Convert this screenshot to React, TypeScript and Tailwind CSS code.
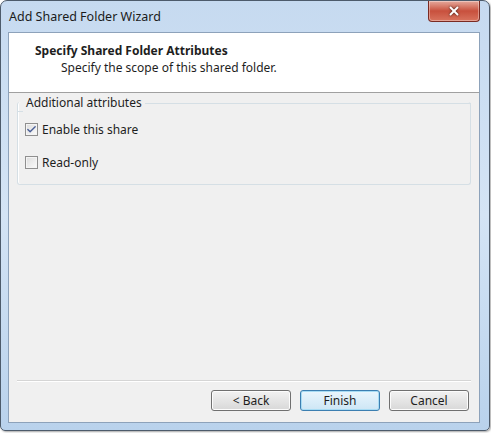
import { X, Check } from 'lucide-react';

const ui = { fontFamily: '"Noto Sans", "Open Sans", sans-serif' };

function WinButton({ label, focused }: { label: string; focused?: boolean }) {
  return (
    <button
      className={`h-[21px] w-[80px] rounded-[3px] border text-[12px] text-[#1e1e1e] bg-gradient-to-b ${
        focused
          ? 'border-[#3c7fb1] from-[#eaf6fd] to-[#cde6f5] shadow-[inset_0_0_0_1px_#a8dcf4]'
          : 'border-[#707070] from-[#f2f2f2] to-[#d8d8d8] shadow-[inset_0_0_0_1px_#fcfcfc]'
      }`}
    >
      {label}
    </button>
  );
}

function CheckRow({ label, checked }: { label: string; checked?: boolean }) {
  return (
    <div className="flex h-[17px] items-center gap-[4px]">
      <span className="flex h-[13px] w-[13px] items-center justify-center border border-[#8f8f8f] bg-gradient-to-br from-[#dcdcdc] to-[#fbfbfb] shadow-[inset_0_0_0_1px_#f4f4f4]">
        {checked && <Check size={11} strokeWidth={3} className="text-[#4a5f97]" />}
      </span>
      <span className="text-[12px] leading-[17px] text-[#1e1e1e]">{label}</span>
    </div>
  );
}

export default function App() {
  return (
    <div className="h-[433px] w-[491px] bg-white" style={ui}>
      <div className="flex h-[431px] w-[490px] flex-col rounded-t-[7px] rounded-b-[5px] border border-[#4d5b6b] bg-gradient-to-b from-[#c6daf0] via-[#d4e4f5] to-[#b9d2ec] shadow-[1px_1px_2px_rgba(0,0,0,0.35)]">
        {/* title bar */}
        <div className="flex h-[31px] shrink-0 items-start">
          <span className="mt-[7px] ml-[8px] text-[12.5px] text-[#1b1b1b]">Add Shared Folder Wizard</span>
          <div className="flex-1" />
          <div className="mr-[9px] flex h-[21px] w-[52px] items-center justify-center rounded-b-[4px] border border-t-0 border-[#7a2a22] bg-gradient-to-b from-[#e4a89c] via-[#c8503d] to-[#d8735e] shadow-[inset_0_0_0_1px_rgba(255,255,255,0.35)]">
            <X size={14} strokeWidth={3.2} className="text-white drop-shadow-[0_0_1px_rgba(0,0,0,0.8)]" />
          </div>
        </div>

        {/* client area */}
        <div className="mx-[7px] mr-[9px] mb-[7px] flex flex-1 flex-col border border-[#8da2ba] bg-[#f0f0f0]">
          <div className="h-[60px] shrink-0 border-b border-[#a0a0a0] bg-white pl-[26px] pt-[9px]">
            <div className="text-[12px] font-bold leading-[17px] text-[#1e1e1e]">Specify Shared Folder Attributes</div>
            <div className="pl-[26px] text-[12px] leading-[17px] text-[#1e1e1e]">Specify the scope of this shared folder.</div>
          </div>

          <div className="px-[8px] pt-[1px]">
            <div className="flex items-center gap-[3px]">
              <div className="w-[6px] self-end border-t border-[#d5dfe5] mb-[-1px]" />
              <span className="text-[12px] leading-[17px] text-[#1e1e1e]">Additional attributes</span>
              <div className="flex-1 self-center border-t border-[#d5dfe5] mt-[1px]" />
            </div>
            <div className="mt-[-9px] h-[83px] rounded-[3px] border border-t-0 border-[#d5dfe5] px-[7px] pt-[19px] shadow-[inset_1px_0_0_#fff]">
              <div className="flex flex-col gap-[16px]">
                <CheckRow label="Enable this share" checked />
                <CheckRow label="Read-only" />
              </div>
            </div>
          </div>

          <div className="flex-1" />
          <div className="mx-[8px] border-t border-[#d5d5d5] border-b-white border-b" />
          <div className="flex h-[40px] items-start justify-end gap-[9px] pr-[10px] pt-[8px]">
            <WinButton label="< Back" />
            <WinButton label="Finish" focused />
            <WinButton label="Cancel" />
          </div>
        </div>
      </div>
    </div>
  );
}
